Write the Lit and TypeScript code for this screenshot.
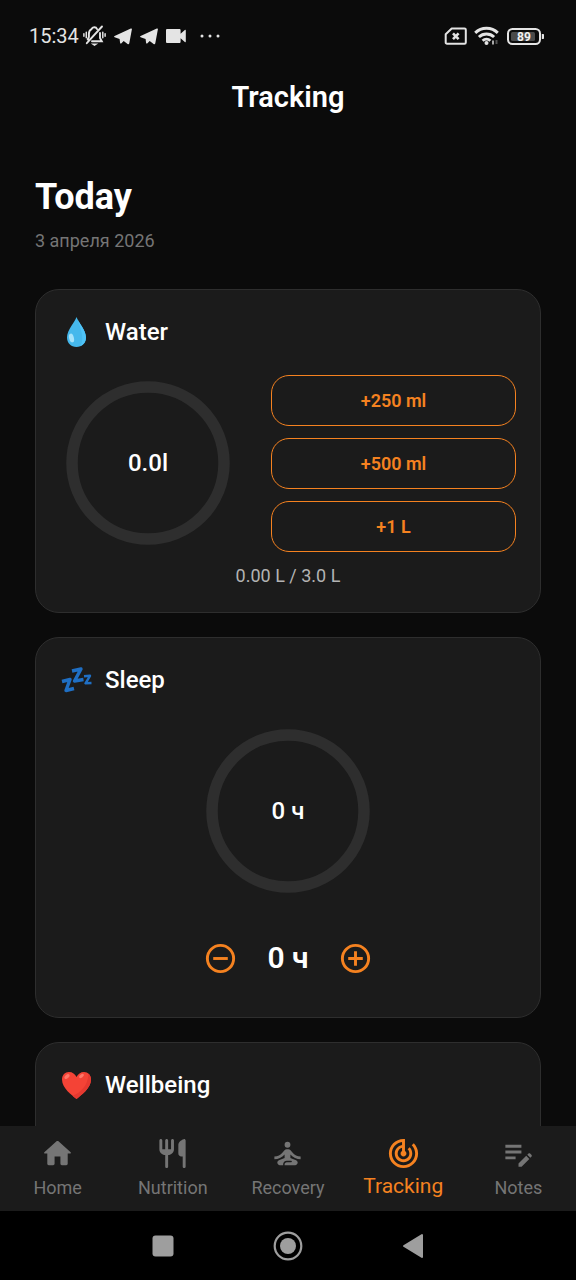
import { LitElement, html, css, svg } from "lit";
import { customElement, property, state } from "lit/decorators.js";

const reset = css`
  * {
    box-sizing: border-box;
  }
  svg {
    display: block;
  }
  button {
    font: inherit;
    color: inherit;
    background: none;
    border: 0;
    padding: 0;
    cursor: pointer;
  }
`;

@customElement("status-bar")
class StatusBar extends LitElement {
  static styles = [
    reset,
    css`
      :host {
        display: flex;
        justify-content: space-between;
        align-items: center;
        height: 72px;
        padding: 0 31px 0 29px;
        color: #e4e4e4;
      }
      .group {
        display: flex;
        align-items: center;
      }
      .left {
        gap: 4px;
      }
      .right {
        gap: 7px;
      }
      .time {
        font-size: 20px;
        line-height: 24px;
      }
      .apps {
        display: flex;
        align-items: center;
        gap: 8px;
      }
      .dots {
        margin-left: 6px;
      }
      .level {
        font-size: 12px;
        font-weight: 700;
      }
    `,
  ];

  render() {
    const plane = html`<svg width="18" height="17" viewBox="0 0 18 17" fill="currentColor">
      <path d="M17.900 1.200 15.300 15.300c-.2 1-1 1.200-1.700.7L9.700 13.100 7.200 15.400c-.5.400-1 .2-1.100-.4L5.600 10.900.6 9.200C-.2 8.900-.1 8.200.6 7.900L16.800.5c.8-.3 1.300 0 1.100.7zM6.600 10.500l8.200-6.300-6.600 7.200z" />
    </svg>`;
    return html`
      <div class="group left">
        <span class="time">15:34</span>
        <div class="apps">
          <svg width="23" height="22" viewBox="0 0 23 22" fill="none" stroke="currentColor" stroke-width="1.900" stroke-linecap="round">
            <path d="M8.500 4.200C9.500 1.600 13 1.600 14 4M17 8v5l1.800 3.300H9M5.900 12V9c0-2.200 1-3.900 2.600-4.800M5.900 12l-1.200 2.500M3.800 18.200 19 1.500" />
            <path d="M9.800 19.200h3.400L11.500 20.300z" fill="currentColor" stroke-width="1.200" />
            <path d="M3.300 7.300v5.400M.9 8.700v2.600M19.800 7.300v5.400M22.100 8.700v2.600" stroke-width="1.500" />
          </svg>
          ${plane} ${plane}
          <svg width="20" height="14" viewBox="0 0 20 14" fill="currentColor">
            <path d="M1.300 0h12c.8 0 1.300.5 1.300 1.300v3.400L18.800 1c.5-.4 1-.2 1 .4v11.200c0 .6-.5.8-1 .4l-4.200-3.700v3.400c0 .8-.5 1.300-1.300 1.300h-12C.5 14 0 13.500 0 12.700V1.300C0 .5.5 0 1.300 0z" />
          </svg>
          <svg class="dots" width="20" height="4" viewBox="0 0 20 4" fill="currentColor">
            <circle cx="2" cy="2" r="1.500" /><circle cx="10" cy="2" r="1.500" /><circle cx="18" cy="2" r="1.500" />
          </svg>
        </div>
      </div>
      <div class="group right">
        <svg width="23" height="18" viewBox="0 0 23 18" fill="none" stroke="currentColor" stroke-width="2">
          <path d="M7.700 1.500H20.500a1.300 1.300 0 0 1 1.300 1.300v12.600a1.300 1.300 0 0 1-1.300 1.300H3a1.300 1.300 0 0 1-1.300-1.300V7.300z" stroke-linejoin="round" />
          <path d="m9 6.300 5.600 5.800M14.600 6.300 9 12.100" stroke-width="2.600" />
        </svg>
        <svg width="26" height="20" viewBox="0 0 26 20" fill="none" stroke="currentColor" stroke-width="2.900">
          <path d="M1.200 6.900a16 16 0 0 1 22.600 0M4.900 11a11 11 0 0 1 15.200 0M8.600 14.800a5.800 5.800 0 0 1 7.800 0" />
          <circle cx="12.500" cy="17" r="2" fill="currentColor" stroke="none" />
          <path d="M19 14.500v4" stroke="#bbb" stroke-width="1.800" />
          <path d="M22.500 14v4" stroke="#555" stroke-width="2" />
        </svg>
        <svg width="38" height="17" viewBox="0 0 38 17">
          <rect x="1" y="1" width="32" height="15" rx="4.500" fill="none" stroke="currentColor" stroke-width="2" />
          <rect x="4" y="4" width="24" height="9" rx="1.500" fill="#4a4a4a" />
          <path d="M34.800 6h1.200c.7 0 1 .4 1 1v3c0 .6-.3 1-1 1h-1.200z" fill="currentColor" />
          <text class="level" x="17" y="13" text-anchor="middle" fill="#f2f2f2">89</text>
        </svg>
      </div>
    `;
  }
}

@customElement("progress-ring")
class ProgressRing extends LitElement {
  @property() label = "";
  @property({ type: Number }) value = 0;

  static styles = [
    reset,
    css`
      :host {
        display: grid;
        place-items: center;
        width: 176px;
        height: 176px;
        flex: none;
      }
      svg,
      .label {
        grid-area: 1 / 1;
      }
      .label {
        font-size: 24px;
        line-height: 28px;
        font-weight: 500;
      }
    `,
  ];

  render() {
    const length = 2 * Math.PI * 76;
    return html`
      <svg width="164" height="164" viewBox="0 0 164 164" fill="none" stroke-width="11.500">
        <circle cx="82" cy="82" r="76" stroke="#2e2e2e" />
        ${this.value > 0
          ? svg`<circle cx="82" cy="82" r="76" stroke="#f58220" transform="rotate(-90 82 82)"
              stroke-dasharray="${length * Math.min(this.value, 1)} ${length}" />`
          : ""}
      </svg>
      <span class="label">${this.label}</span>
    `;
  }
}

@customElement("track-card")
class TrackCard extends LitElement {
  @property() heading = "";

  static styles = [
    reset,
    css`
      :host {
        display: block;
        padding: 24px;
        border: 1px solid #2e2e2e;
        border-radius: 24px;
        background: #1b1b1b;
      }
      .head {
        display: flex;
        align-items: center;
        gap: 12px;
        height: 36px;
        margin-bottom: 25px;
      }
      h2 {
        margin: 0;
        font-size: 24px;
        line-height: 28px;
        font-weight: 500;
      }
    `,
  ];

  render() {
    return html`
      <div class="head">
        <slot name="icon"></slot>
        <h2>${this.heading}</h2>
      </div>
      <slot></slot>
    `;
  }
}

const tabs = [
  {
    name: "Home",
    path: "M10 19v-5h4v5c0 .55.45 1 1 1h3c.55 0 1-.45 1-1v-7h1.700c.46 0 .68-.57.33-.87L12.670 3.600c-.38-.34-.96-.34-1.340 0l-8.360 7.530c-.34.3-.13.87.33.87H5v7c0 .55.45 1 1 1h3c.55 0 1-.45 1-1z",
  },
  {
    name: "Nutrition",
    path: "M16 6v6c0 1.100.9 2 2 2h1v7c0 .55.45 1 1 1s1-.45 1-1V3.130c0-.65-.61-1.130-1.240-.98C17.600 2.680 16 4.510 16 6zm-5 3H9V3c0-.55-.45-1-1-1s-1 .45-1 1v6H5V3c0-.55-.45-1-1-1s-1 .45-1 1v6c0 2.210 1.790 4 4 4v8c0 .55.45 1 1 1s1-.45 1-1v-8c2.210 0 4-1.790 4-4V3c0-.55-.45-1-1-1s-1 .45-1 1v6z",
  },
  {
    name: "Recovery",
    path: "M12 4a2 2 0 1 0 0 4 2 2 0 0 0 0-4zM21 16v-2c-2.240 0-4.160-.96-5.600-2.680l-1.340-1.600C13.680 9.260 13.120 9 12.530 9h-1.050c-.6 0-1.150.26-1.530.72l-1.340 1.600C7.160 13.040 5.240 14 3 14v2c2.770 0 5.190-1.170 7-3.250V15l-3.880 1.550c-.67.27-1.120.93-1.120 1.660C5 19.200 5.800 20 6.790 20H9v-.5c0-1.380 1.120-2.500 2.500-2.500h3c.28 0 .5.22.5.5s-.22.5-.5.5h-3c-.83 0-1.500.67-1.500 1.500v.5h7.210c.99 0 1.790-.8 1.790-1.790 0-.73-.45-1.390-1.120-1.660L14 15v-2.250c1.810 2.080 4.230 3.250 7 3.250z",
  },
  {
    name: "Tracking",
    path: "M19.070 4.930l-1.410 1.410C19.100 7.790 20 9.790 20 12c0 4.420-3.580 8-8 8s-8-3.580-8-8c0-4.080 3.050-7.440 7-7.930v2.020C8.160 6.570 6 9.030 6 12c0 3.310 2.690 6 6 6s6-2.690 6-6c0-1.660-.67-3.160-1.760-4.240l-1.410 1.410C15.550 9.900 16 10.900 16 12c0 2.210-1.790 4-4 4s-4-1.790-4-4c0-1.860 1.280-3.410 3-3.860v2.140c-.6.35-1 .98-1 1.720 0 1.100.9 2 2 2s2-.9 2-2c0-.74-.4-1.380-1-1.720V2h-1C6.480 2 2 6.480 2 12s4.480 10 10 10 10-4.480 10-10c0-2.760-1.120-5.260-2.930-7.070z",
  },
  {
    name: "Notes",
    path: "M3 10h11v2H3v-2zm0-2h11V6H3v2zm0 8h7v-2H3v2zm15.010-3.130.71-.71c.39-.39 1.020-.39 1.410 0l.71.71c.39.39.39 1.020 0 1.410l-.71.71-2.120-2.120zm-.71.71-5.300 5.300V21h2.120l5.300-5.300-2.120-2.120z",
  },
];

@customElement("tab-bar")
class TabBar extends LitElement {
  @property() current = "Tracking";

  static styles = [
    reset,
    css`
      :host {
        display: block;
        background: #1b1b1b;
      }
      nav {
        display: grid;
        grid-template-columns: repeat(5, 1fr);
        height: 85px;
      }
      a {
        display: flex;
        flex-direction: column;
        align-items: center;
        padding-top: 10px;
        gap: 4px;
        color: #757575;
        font-size: 18px;
        line-height: 26px;
        text-decoration: none;
      }
      .active {
        gap: 2px;
        color: #f58220;
        font-size: 21px;
      }
    `,
  ];

  render() {
    return html`
      <nav>
        ${tabs.map(
          (tab) => html`
            <a href="#${tab.name.toLowerCase()}" class=${tab.name === this.current ? "active" : ""}>
              <svg width="35" height="35" viewBox="0 0 24 24" fill="currentColor"><path d=${tab.path} /></svg>
              <span>${tab.name}</span>
            </a>
          `
        )}
      </nav>
    `;
  }
}

@customElement("app-root")
class AppRoot extends LitElement {
  @state() private water = 0;
  @state() private sleep = 0;

  static styles = [
    reset,
    css`
      :host {
        display: flex;
        flex-direction: column;
        height: 100vh;
        background: #0b0b0b;
        color: #fff;
        font-family: Roboto, "Noto Sans", sans-serif;
      }
      .title {
        margin: 0;
        padding: 8px 0;
        text-align: center;
        font-size: 29px;
        line-height: 34px;
        font-weight: 600;
      }
      main {
        flex: 1;
        min-height: 0;
        overflow: hidden;
        padding: 53px 35px 0;
      }
      .today {
        margin: 0;
        font-size: 36px;
        line-height: 44px;
        font-weight: 700;
      }
      .date {
        margin: 10px 0 36px;
        font-size: 18px;
        line-height: 24px;
        color: #757575;
      }
      .cards {
        display: flex;
        flex-direction: column;
        gap: 24px;
      }
      .row {
        display: flex;
        align-items: flex-start;
        gap: 35px;
      }
      .amounts {
        flex: 1;
        display: flex;
        flex-direction: column;
        gap: 12px;
      }
      .amount {
        height: 51px;
        border: 1px solid #f58220;
        border-radius: 18px;
        color: #f58220;
        font-size: 18px;
        font-weight: 600;
      }
      .total {
        margin: 12px 0 0;
        text-align: center;
        font-size: 18px;
        line-height: 24px;
        color: #b3b3b3;
      }
      .center {
        display: flex;
        flex-direction: column;
        align-items: center;
        gap: 24px;
      }
      .stepper {
        display: flex;
        align-items: center;
        gap: 12px;
      }
      .step {
        display: grid;
        place-items: center;
        width: 70px;
        height: 70px;
        color: #f58220;
      }
      .hours {
        font-size: 30px;
        line-height: 36px;
        font-weight: 600;
      }
      .keys {
        display: flex;
        justify-content: center;
        align-items: center;
        gap: 90px;
        height: 69px;
        background: #000;
        color: #9e9e9e;
      }
      .key {
        display: grid;
        place-items: center;
        width: 35px;
        height: 35px;
      }
    `,
  ];

  private addWater(amount: number) {
    this.water += amount;
  }

  private addSleep(hours: number) {
    this.sleep = Math.max(0, Math.min(24, this.sleep + hours));
  }

  render() {
    return html`
      <status-bar></status-bar>
      <h1 class="title">Tracking</h1>
      <main>
        <h2 class="today">Today</h2>
        <p class="date">3 апреля 2026</p>
        <div class="cards">
          <track-card heading="Water">
            <svg slot="icon" width="33" height="32" viewBox="0 0 33 32">
              <path d="M16.500 1C18 6 26 14 26 21.500 26 27 22 31 16.500 31S7 27 7 21.500C7 14 15 6 16.500 1z" fill="#45b8ec" />
              <path d="M16.500 1C18 6 26 14 26 21.500c0 4-2 7-5.500 8.500C25 22 20 10 16.500 1z" fill="#4fc3f7" />
              <ellipse cx="11.500" cy="22" rx="2.400" ry="4.500" transform="rotate(-14 11.500 22)" fill="#a5e2fa" />
            </svg>
            <div class="row">
              <progress-ring label="${this.water.toFixed(1)}l" .value=${this.water / 3}></progress-ring>
              <div class="amounts">
                <button class="amount" @click=${() => this.addWater(0.25)}>+250 ml</button>
                <button class="amount" @click=${() => this.addWater(0.5)}>+500 ml</button>
                <button class="amount" @click=${() => this.addWater(1)}>+1 L</button>
              </div>
            </div>
            <p class="total">${this.water.toFixed(2)} L / 3.0 L</p>
          </track-card>

          <track-card heading="Sleep">
            <svg slot="icon" width="33" height="32" viewBox="0 0 33 32" fill="none" stroke="#1f6fc4" stroke-linejoin="round">
              <path d="M2 17.500 10 15.500 6 26.500 14 24.500" stroke-width="3.400" />
              <path d="M12 7 21 5 14.500 17 23.500 15.500" stroke-width="3.400" />
              <path d="M24 12.300 30 11.800 25.500 19.300 31.500 19" stroke-width="2.400" />
            </svg>
            <div class="center">
              <progress-ring label="${this.sleep} ч" .value=${this.sleep / 8}></progress-ring>
              <div class="stepper">
                <button class="step" aria-label="−" @click=${() => this.addSleep(-1)}>
                  <svg width="35" height="35" viewBox="0 0 24 24" fill="none" stroke="currentColor" stroke-width="2">
                    <circle cx="12" cy="12" r="9" /><path d="M7 12h10" />
                  </svg>
                </button>
                <span class="hours">${this.sleep} ч</span>
                <button class="step" aria-label="+" @click=${() => this.addSleep(1)}>
                  <svg width="35" height="35" viewBox="0 0 24 24" fill="none" stroke="currentColor" stroke-width="2">
                    <circle cx="12" cy="12" r="9" /><path d="M7 12h10M12 7v10" />
                  </svg>
                </button>
              </div>
            </div>
          </track-card>

          <track-card heading="Wellbeing">
            <svg slot="icon" width="33" height="32" viewBox="0 0 33 32">
              <path d="M16.500 30C12 26 2 19.500 2 10.500 2 6 5 3 9 3c3.500 0 6 2 7.500 5C18 5 20.500 3 24 3c4 0 7 3 7 7.500 0 9-10 15.500-14.500 19.500z" fill="#f44336" />
              <path d="M31 10.500c0 9-10 15.500-14.500 19.500-1-1-2.500-2-4-3.300C20 24 28 17 28.500 4.700 30 6 31 8 31 10.500z" fill="#e53930" />
              <ellipse cx="7" cy="7.500" rx="3" ry="1.800" transform="rotate(-42 7 7.500)" fill="#ff7769" />
              <ellipse cx="21.500" cy="7" rx="2.800" ry="1.500" transform="rotate(-38 21.500 7)" fill="#ff7769" />
            </svg>
          </track-card>
        </div>
      </main>
      <tab-bar></tab-bar>
      <div class="keys">
        <button class="key" aria-label="▢">
          <svg width="22" height="22" viewBox="0 0 22 22"><rect x=".5" y=".5" width="21" height="21" rx="3" fill="currentColor" /></svg>
        </button>
        <button class="key" aria-label="○">
          <svg width="30" height="30" viewBox="0 0 30 30">
            <circle cx="15" cy="15" r="13.300" fill="none" stroke="currentColor" stroke-width="2.200" />
            <circle cx="15" cy="15" r="8" fill="currentColor" />
          </svg>
        </button>
        <button class="key" aria-label="◁">
          <svg width="22" height="26" viewBox="0 0 22 26">
            <path d="M2 13 20 2v22z" fill="currentColor" stroke="currentColor" stroke-width="2" stroke-linejoin="round" />
          </svg>
        </button>
      </div>
    `;
  }
}
